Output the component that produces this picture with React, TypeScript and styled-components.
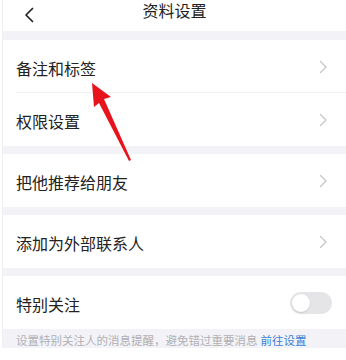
import React from 'react';
import styled, { createGlobalStyle } from 'styled-components';

const GlobalStyle = createGlobalStyle`
  html, body {
    margin: 0;
    padding: 0;
    background: #ffffff;
  }
  body {
    font-family: "Noto Sans CJK SC", "Noto Sans", sans-serif;
    color: #222222;
  }
`;

const Page = styled.div`
  position: relative;
  width: 346px;
  height: 360px;
  overflow: hidden;
  background: #ffffff;
`;

const Screen = styled.div`
  margin-left: 2px;
  border-left: 1px solid #efeff2;
  display: flex;
  flex-direction: column;
`;

const Header = styled.div`
  height: 31px;
  display: flex;
  align-items: flex-start;
  justify-content: center;
  position: relative;
  background: #ffffff;
`;

const BackButton = styled.div`
  position: absolute;
  left: 20px;
  top: 4px;
  width: 12px;
  height: 16px;
`;

const Title = styled.div`
  font-size: 16px;
  line-height: 18px;
  color: #222222;
  margin-top: 1px;
`;

const Band = styled.div<{ h: number }>`
  height: ${p => p.h}px;
  background: #f3f3f7;
`;

const Group = styled.div`
  background: #ffffff;
  display: flex;
  flex-direction: column;
`;

const Row = styled.div<{ divider?: boolean }>`
  height: 53px;
  display: flex;
  align-items: center;
  justify-content: space-between;
  padding: 0 18px 0 13px;
  position: relative;
  &::after {
    content: "";
    display: ${p => (p.divider ? 'block' : 'none')};
    position: absolute;
    left: 13px;
    right: 0;
    bottom: 0;
    height: 1px;
    background: #f1f1f3;
  }
`;

const Label = styled.span`
  font-size: 16px;
  line-height: 22px;
  color: #222222;
  padding-top: 2px;
`;

const Toggle = styled.div`
  width: 42px;
  height: 22px;
  border-radius: 11px;
  background: #e5e5e7;
  position: relative;
  margin-right: -4px;
`;

const Knob = styled.div`
  position: absolute;
  left: 2px;
  top: 2px;
  width: 18px;
  height: 18px;
  border-radius: 50%;
  background: #ffffff;
  box-shadow: 0 1px 2px rgba(0, 0, 0, 0.12);
`;

const Footer = styled.div`
  flex: 1;
  height: 30px;
  background: #f3f3f7;
  display: flex;
  align-items: center;
  padding: 3px 0 0 13px;
  font-size: 11.5px;
  color: #b0b0b4;
  white-space: nowrap;
`;

const Link = styled.span`
  color: #3a7fd5;
  margin-left: 3px;
`;

const Arrow = styled.svg`
  position: absolute;
  left: 0;
  top: 0;
  pointer-events: none;
`;

function Chevron() {
  return (
    <svg width="9" height="14" viewBox="0 0 9 14">
      <path d="M1.5 1.5 L7 7 L1.5 12.5" fill="none" stroke="#c6c6ca" strokeWidth="1.3" strokeLinecap="round" strokeLinejoin="round" />
    </svg>
  );
}

const items = [
  { label: '备注和标签', divider: true },
  { label: '权限设置' },
];

export default function App() {
  return (
    <Page>
      <GlobalStyle />
      <Screen>
        <Header>
          <BackButton>
            <svg width="12" height="16" viewBox="0 0 12 16">
              <path d="M9.5 1.5 L3 8 L9.5 14.5" fill="none" stroke="#222" strokeWidth="1.7" strokeLinecap="round" strokeLinejoin="round" />
            </svg>
          </BackButton>
          <Title>资料设置</Title>
        </Header>
        <Band h={9} />
        <Group>
          {items.map((it, i) => (
            <Row key={i} divider={it.divider}>
              <Label>{it.label}</Label>
              <Chevron />
            </Row>
          ))}
        </Group>
        <Band h={8} />
        <Group>
          <Row>
            <Label>把他推荐给朋友</Label>
            <Chevron />
          </Row>
        </Group>
        <Band h={8} />
        <Group>
          <Row>
            <Label>添加为外部联系人</Label>
            <Chevron />
          </Row>
        </Group>
        <Band h={8} />
        <Group>
          <Row>
            <Label>特别关注</Label>
            <Toggle>
              <Knob />
            </Toggle>
          </Row>
        </Group>
        <Footer>
          设置特别关注人的消息提醒，避免错过重要消息<Link>前往设置</Link>
        </Footer>
      </Screen>
      <Arrow width="346" height="360" viewBox="0 0 346 360">
        <polygon points="92,83 111,97 104,99 131,160 129,161 99,103 94,107" fill="#e8141c" />
      </Arrow>
    </Page>
  );
}
